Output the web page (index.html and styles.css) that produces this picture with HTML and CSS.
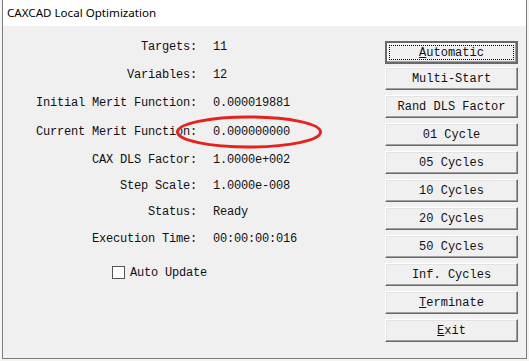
FILE: index.html
```html
<!DOCTYPE html>
<html>
  <head>
    <title>CAXCAD Local Optimization</title>
    <link rel="stylesheet" href="styles.css">
  </head>
  <body>
    <div class="window">
      <div class="titlebar">CAXCAD Local Optimization</div>
      <div class="client">
        <div class="info">
          <div class="fields">
            <span class="label">Targets:</span><span class="value">11</span>
            <span class="label">Variables:</span><span class="value">12</span>
            <span class="label">Initial Merit Function:</span><span class="value">0.000019881</span>
            <span class="label">Current Merit Function:</span><span class="value">0.000000000</span>
            <span class="label">CAX DLS Factor:</span><span class="value">1.0000e+002</span>
            <span class="label">Step Scale:</span><span class="value">1.0000e-008</span>
            <span class="label">Status:</span><span class="value">Ready</span>
            <span class="label">Execution Time:</span><span class="value">00:00:00:016</span>
          </div>
          <label class="check">
            <span class="box"></span>
            <span>Auto Update</span>
          </label>
        </div>
        <div class="buttons">
          <button class="btn btn-default"><span class="focus"><u>A</u>utomatic</span></button>
          <button class="btn">Multi-Start</button>
          <button class="btn">Rand DLS Factor</button>
          <button class="btn">01 Cycle</button>
          <button class="btn">05 Cycles</button>
          <button class="btn">10 Cycles</button>
          <button class="btn">20 Cycles</button>
          <button class="btn">50 Cycles</button>
          <button class="btn">Inf. Cycles</button>
          <button class="btn"><u>T</u>erminate</button>
          <button class="btn"><u>E</u>xit</button>
        </div>
        <svg class="mark" width="156" height="40" viewBox="0 0 156 40">
          <ellipse cx="78" cy="20" rx="71.5" ry="15" fill="none" stroke="#e5231c" stroke-width="3" />
        </svg>
      </div>
    </div>
  </body>
</html>
```

FILE: styles.css
```css
body {
  margin: 0;
  background: #f6f4f0;
  font-family: "Liberation Mono", monospace;
  font-size: 12px;
  letter-spacing: -0.2px;
  color: #111;
}

.window {
  width: 523px;
  height: 358px;
  margin-left: 2px;
  border: 1px solid #7d7d7d;
  border-top: none;
  background: #f0f0f0;
  display: flex;
  flex-direction: column;
}

.titlebar {
  height: 26px;
  background: #fff;
  font-family: "Noto Sans", "Liberation Sans", sans-serif;
  font-size: 11.6px;
  letter-spacing: 0;
  color: #000;
  line-height: 26px;
  padding-left: 4px;
}

.client {
  flex: 1;
  display: flex;
  position: relative;
}

.info {
  flex: 1;
  padding-top: 7px;
}

.fields {
  display: grid;
  grid-template-columns: 194px auto;
  grid-template-rows: 28px 28px 28px 29px 27px 26px 25px 29px;
  column-gap: 16px;
  align-items: center;
}

.label {
  text-align: right;
}

.check {
  display: flex;
  align-items: center;
  gap: 5px;
  margin: 13px 0 0 109px;
  height: 13px;
}

.box {
  width: 11px;
  height: 11px;
  background: #fff;
  border: 1px solid #555;
}

.buttons {
  width: 133px;
  margin-right: 8px;
  padding-top: 15px;
  display: flex;
  flex-direction: column;
  gap: 5px;
}

.btn {
  height: 23px;
  padding: 0;
  background: #f0f0f0;
  font: inherit;
  color: #111;
  border: 1px solid;
  border-color: #fff #696969 #696969 #fff;
  box-shadow: inset -1px -1px #a0a0a0, inset 1px 1px #e3e3e3;
}

.btn-default {
  margin-bottom: -2px;
  border: 2px solid #696969;
  box-shadow: inset -1px -1px #a0a0a0, inset 1px 1px #fff;
  padding: 2px;
}

.focus {
  display: flex;
  align-items: center;
  justify-content: center;
  height: 100%;
  border: 1px dotted #000;
  box-sizing: border-box;
}

.mark {
  position: absolute;
  left: 168px;
  top: 86px;
}
```
